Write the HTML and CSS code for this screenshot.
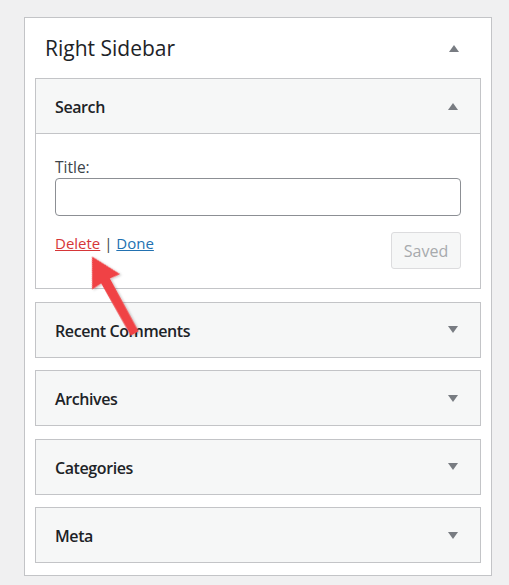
FILE: index.html
```html
<!DOCTYPE html>
<html lang="en">
<head>
<meta charset="utf-8">
<title>Right Sidebar</title>
<link rel="stylesheet" href="styles.css">
</head>
<body>
<div class="sidebar">
  <div class="sidebar-head">
    <h2 class="sidebar-title">Right Sidebar</h2>
    <span class="tri tri-up"></span>
  </div>
  <div class="widget open">
    <div class="widget-head">
      <h3 class="widget-title">Search</h3>
      <span class="tri tri-up"></span>
    </div>
    <div class="widget-body">
      <label class="field-label" for="title">Title:</label>
      <input class="field-input" id="title" type="text">
      <div class="widget-actions">
        <div class="links"><a href="#" class="link-delete">Delete</a><span class="sep"> | </span><a href="#" class="link-done">Done</a></div>
        <button class="btn-saved" type="button" disabled>Saved</button>
      </div>
    </div>
  </div>
  <div class="widget">
    <div class="widget-head">
      <h3 class="widget-title">Recent Comments</h3>
      <span class="tri tri-down"></span>
    </div>
  </div>
  <div class="widget">
    <div class="widget-head">
      <h3 class="widget-title">Archives</h3>
      <span class="tri tri-down"></span>
    </div>
  </div>
  <div class="widget">
    <div class="widget-head">
      <h3 class="widget-title">Categories</h3>
      <span class="tri tri-down"></span>
    </div>
  </div>
  <div class="widget">
    <div class="widget-head">
      <h3 class="widget-title">Meta</h3>
      <span class="tri tri-down"></span>
    </div>
  </div>
</div>
<svg class="pointer" width="509" height="585" viewBox="0 0 509 585" aria-hidden="true">
  <defs>
    <filter id="sh" x="-50%" y="-50%" width="200%" height="200%">
      <feDropShadow dx="1" dy="1.5" stdDeviation="1.3" flood-color="#000" flood-opacity="0.22"/>
    </filter>
  </defs>
  <g transform="translate(92 256.5) rotate(-29)" filter="url(#sh)">
    <polygon points="0,0 16,29 5,28 4.5,88 -4.5,88 -5,28 -16,29" fill="#f04245"/>
  </g>
</svg>
</body>
</html>
```
FILE: styles.css
```css
html, body {
  margin: 0;
  padding: 0;
}
body {
  background: #f0f0f1;
  font-family: "Open Sans", "Noto Sans", sans-serif;
  color: #1d2327;
  padding: 17px 0 0 24px;
  height: 585px;
  box-sizing: border-box;
  position: relative;
  overflow: hidden;
}
.sidebar {
  width: 468px;
  box-sizing: border-box;
  background: #fff;
  border: 1px solid #c3c4c7;
  padding: 16px 10px 12px;
}
.sidebar-head {
  display: flex;
  align-items: center;
  justify-content: space-between;
  padding: 0 22px 0 10px;
  margin-bottom: 16px;
  height: 28px;
}
.sidebar-title {
  margin: 0;
  font-size: 21px;
  font-weight: 500;
  line-height: 28px;
  color: #1d2327;
}
.tri {
  display: block;
  width: 0;
  height: 0;
  border-left: 5px solid transparent;
  border-right: 5px solid transparent;
}
.tri-up {
  border-bottom: 7px solid #787c82;
}
.tri-down {
  border-top: 7px solid #787c82;
}
.widget {
  border: 1px solid #c3c4c7;
  background: #f6f7f7;
  margin-top: 12.5px;
}
.widget.open {
  margin-top: 0;
  background: #fff;
}
.widget-head {
  height: 54px;
  display: flex;
  align-items: center;
  justify-content: space-between;
  padding: 0 22px 0 19px;
  background: #f6f7f7;
}
.widget.open .widget-head {
  border-bottom: 1px solid #c3c4c7;
}
.widget-title {
  margin: 0;
  font-size: 16px;
  font-weight: 600;
  letter-spacing: -0.4px;
  line-height: 22px;
  color: #1d2327;
  padding-top: 2px;
}
.widget-body {
  padding: 23px 19px 19px 19px;
}
.field-label {
  display: block;
  font-size: 15.5px;
  line-height: 21px;
  color: #3c434a;
}
.field-input {
  display: block;
  width: 100%;
  height: 38px;
  box-sizing: border-box;
  border: 1px solid #8c8f94;
  border-radius: 4px;
  margin: 0;
  background: #fff;
}
.widget-actions {
  display: flex;
  justify-content: space-between;
  align-items: flex-start;
  margin-top: 16px;
}
.links {
  font-size: 15px;
  line-height: 21px;
  padding-top: 1px;
}
.link-delete {
  color: #d63638;
}
.link-done {
  color: #2271b1;
}
.sep {
  color: #3c434a;
}
.btn-saved {
  width: 70px;
  height: 37px;
  box-sizing: border-box;
  background: #f6f7f7;
  border: 1px solid #dcdcde;
  border-radius: 3px;
  color: #a7aaad;
  font-family: "Open Sans", "Noto Sans", sans-serif;
  font-size: 16px;
  padding: 0;
  margin: 0;
}
.pointer {
  position: absolute;
  left: 0;
  top: 0;
  pointer-events: none;
}
```
